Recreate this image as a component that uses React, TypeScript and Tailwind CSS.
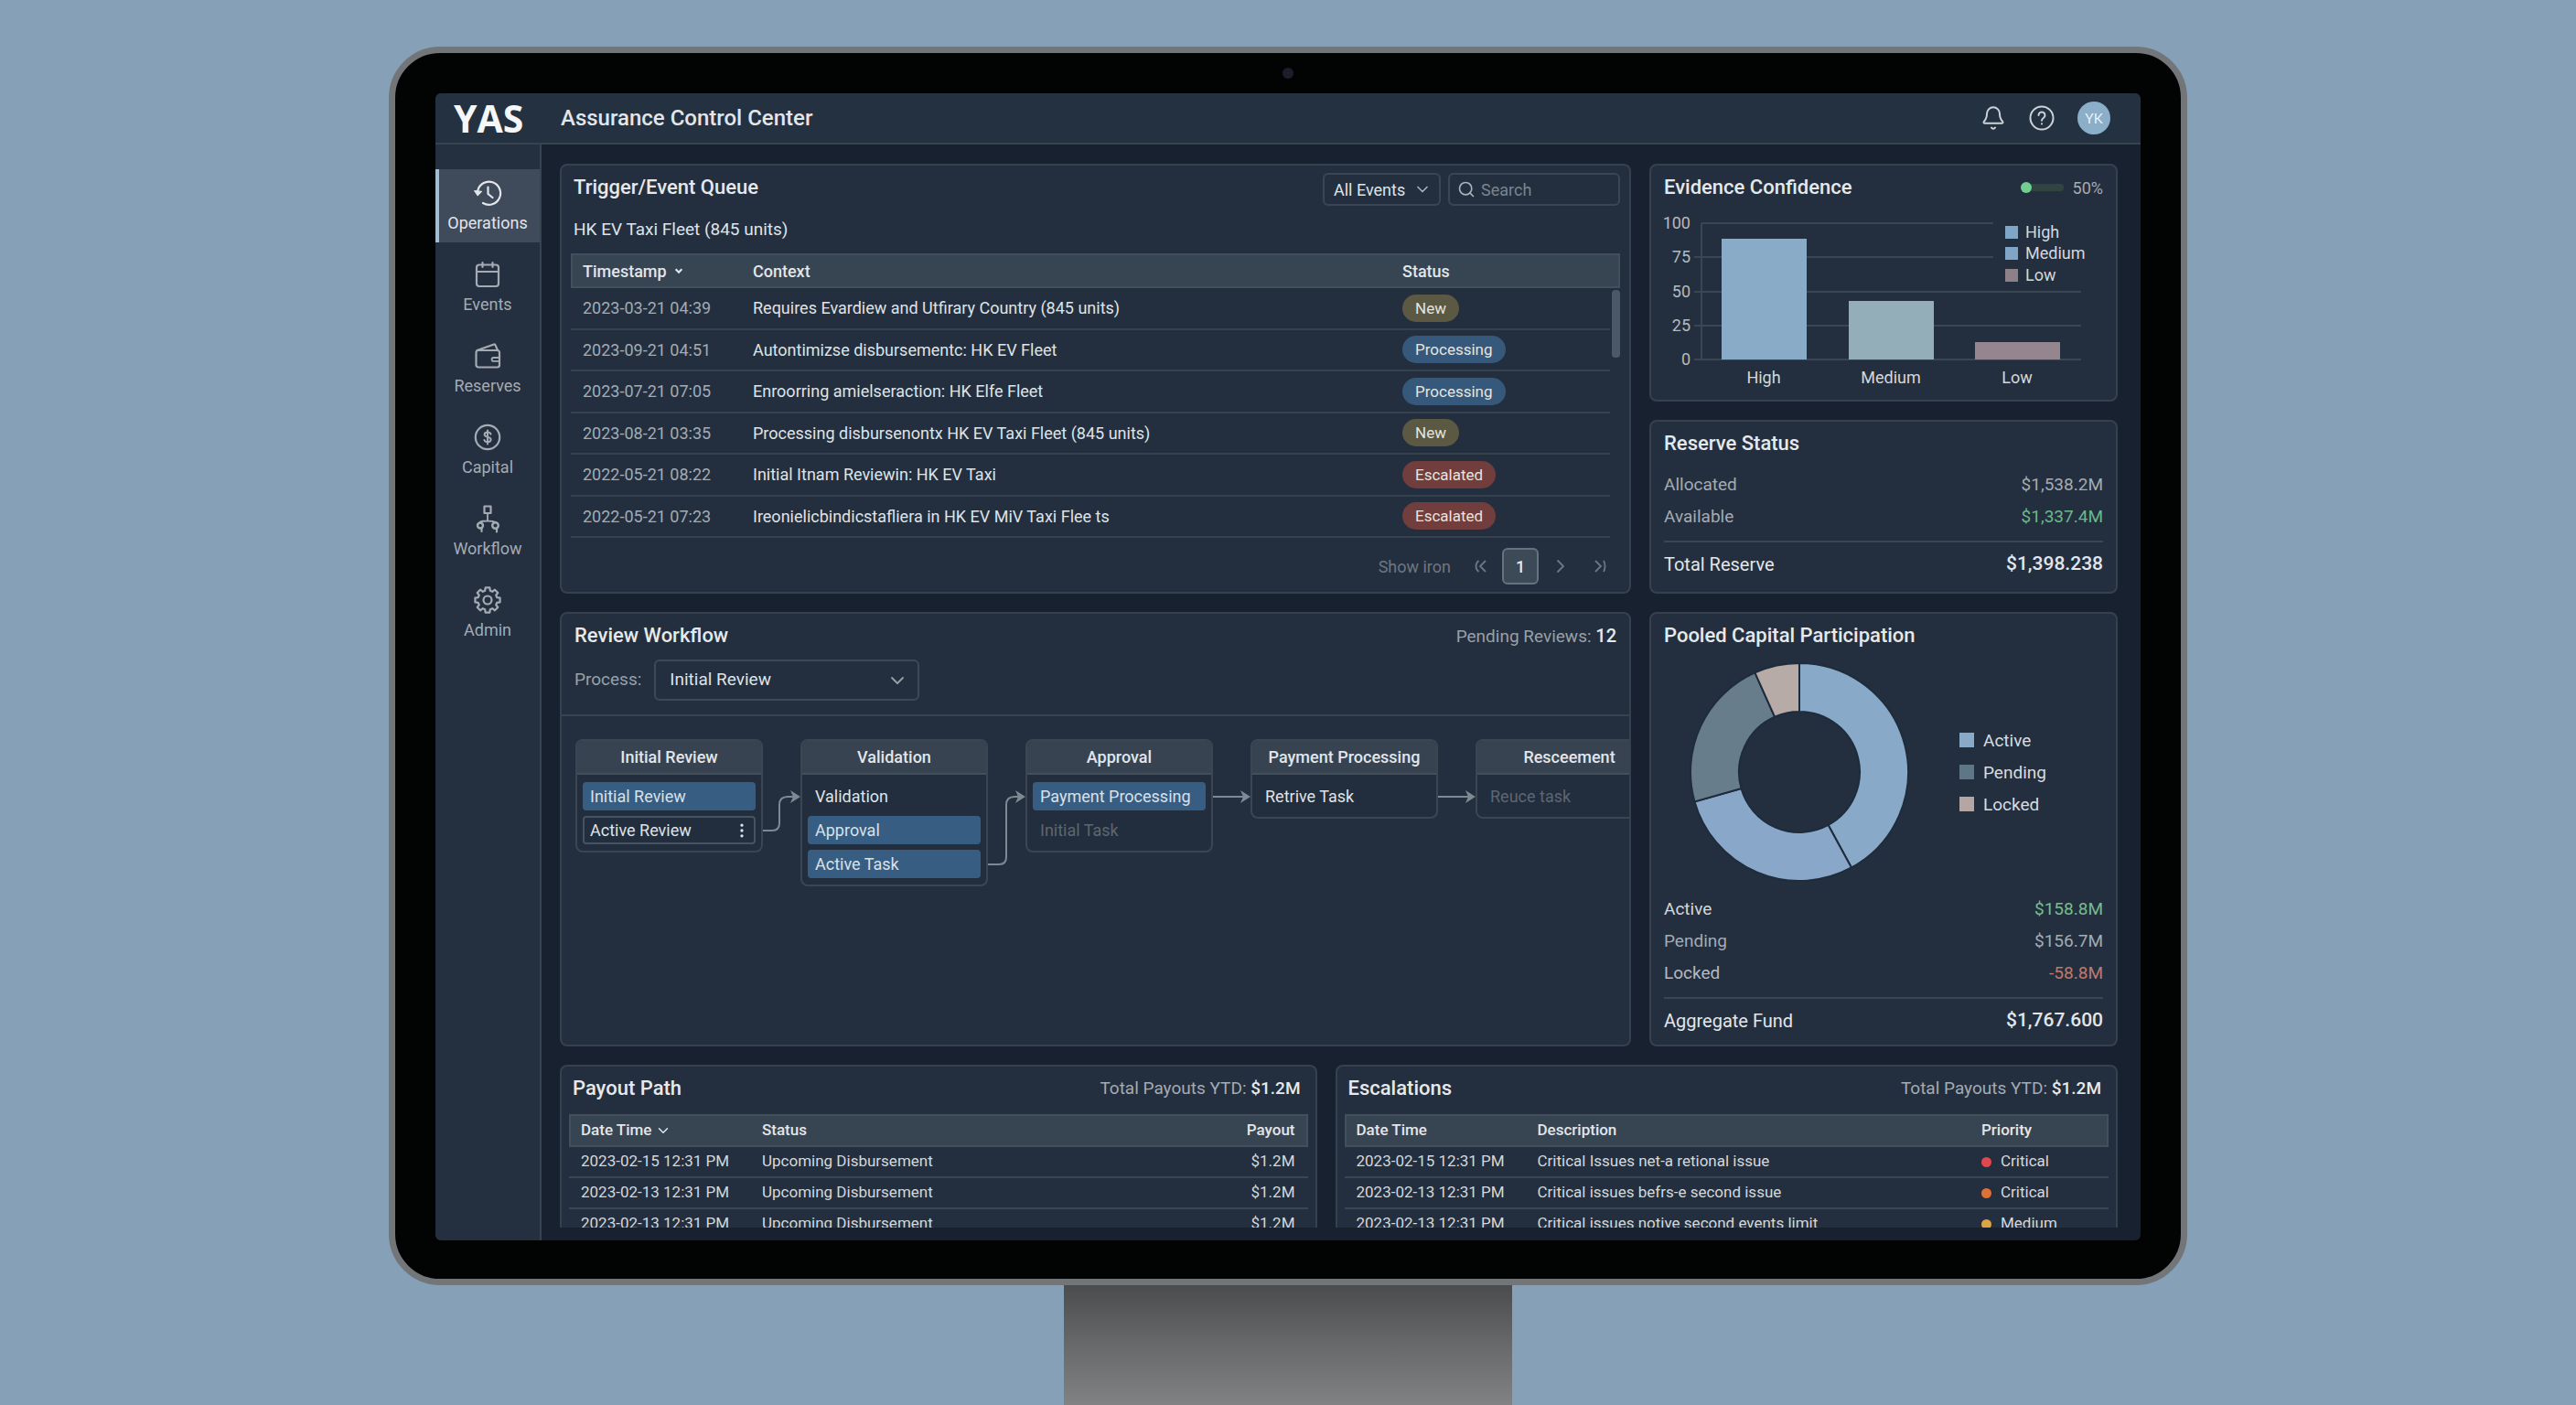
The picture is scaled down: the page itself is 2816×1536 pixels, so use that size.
import React from 'react';
import { Bell, ChevronDown, ChevronRight, EllipsisVertical, Search } from 'lucide-react';

type Status = 'New' | 'Processing' | 'Escalated';

const statusStyles: Record<Status, string> = {
  New: 'bg-[#5b5943]',
  Processing: 'bg-[#36597b]',
  Escalated: 'bg-[#713d3d]',
};

const events: { time: string; context: string; status: Status }[] = [
  { time: '2023-03-21 04:39', context: 'Requires Evardiew and Utfirary Country (845 units)', status: 'New' },
  { time: '2023-09-21 04:51', context: 'Autontimizse disbursementc: HK EV Fleet', status: 'Processing' },
  { time: '2023-07-21 07:05', context: 'Enroorring amielseraction: HK Elfe Fleet', status: 'Processing' },
  { time: '2023-08-21 03:35', context: 'Processing disbursenontx HK EV Taxi Fleet (845 units)', status: 'New' },
  { time: '2022-05-21 08:22', context: 'Initial Itnam Reviewin: HK EV Taxi', status: 'Escalated' },
  { time: '2022-05-21 07:23', context: 'Ireonielicbindicstafliera in HK EV MiV Taxi Flee ts', status: 'Escalated' },
];

const payouts = [
  { time: '2023-02-15 12:31 PM', status: 'Upcoming Disbursement', amount: '$1.2M' },
  { time: '2023-02-13 12:31 PM', status: 'Upcoming Disbursement', amount: '$1.2M' },
  { time: '2023-02-13 12:31 PM', status: 'Upcoming Disbursement', amount: '$1.2M' },
];

const escalations = [
  { time: '2023-02-15 12:31 PM', text: 'Critical Issues net-a retional issue', priority: 'Critical', dot: 'bg-[#e0484f]' },
  { time: '2023-02-13 12:31 PM', text: 'Critical issues befrs-e second issue', priority: 'Critical', dot: 'bg-[#dd7138]' },
  { time: '2023-02-13 12:31 PM', text: 'Critical issues notive second events limit', priority: 'Medium', dot: 'bg-[#dba545]' },
];

/* ---------- icons ---------- */

const Icon: React.FC<{ children: React.ReactNode }> = ({ children }) => (
  <svg className="w-8 h-8" viewBox="0 0 32 32" fill="none" stroke="currentColor" strokeWidth={2.2} strokeLinecap="round" strokeLinejoin="round" aria-hidden="true">
    {children}
  </svg>
);

// Eight teeth, four corners each
const gearPath = () => {
  const pts: string[] = [];
  for (let i = 0; i < 8; i++) {
    const base = (i * Math.PI) / 4;
    [[-0.27, 10.6], [-0.17, 13.8], [0.17, 13.8], [0.27, 10.6]].forEach(([a, r]) => {
      pts.push(`${(16 + r * Math.sin(base + a)).toFixed(2)} ${(16 - r * Math.cos(base + a)).toFixed(2)}`);
    });
  }
  return `M${pts.join('L')}Z`;
};

const navItems = [
  {
    label: 'Operations',
    icon: (
      <Icon>
        <path d="M5.2 13.5A12.6 12.6 0 1 1 11 27" />
        <path d="M1.8 13.6l7.6.8-4.2 4.2z" fill="currentColor" strokeWidth={1.2} />
        <path d="M16.5 9.5v7.5l5 4" />
      </Icon>
    ),
  },
  {
    label: 'Events',
    icon: (
      <Icon>
        <rect x="4" y="5.5" width="24" height="23.5" rx="3" />
        <path d="M4 13h24M10.5 3v5M21.5 3v5" />
      </Icon>
    ),
  },
  {
    label: 'Reserves',
    icon: (
      <Icon>
        <rect x="3.5" y="10" width="25.5" height="18.5" rx="2.5" />
        <path d="M4.5 10L23 3.5c.8-.2 1.3.1 1.6.9L27 10" />
        <path d="M28 18h-5.5a1.9 1.9 0 0 0 0 3.8H28" strokeWidth={1.8} />
      </Icon>
    ),
  },
  {
    label: 'Capital',
    icon: (
      <Icon>
        <circle cx="16" cy="16" r="13.2" />
        <path d="M19.5 12.6c-.5-1.4-1.8-2-3.5-2-2 0-3.4.9-3.4 2.5 0 3.5 7 1.9 7 5.500 0 1.700-1.500 2.700-3.500 2.700-1.900 0-3.200-.8-3.700-2.300M16 8.500v15" strokeWidth={2} />
      </Icon>
    ),
  },
  {
    label: 'Workflow',
    icon: (
      <Icon>
        <rect x="12.5" y="2.5" width="7" height="7.5" />
        <path d="M16 10v8.5M8 19.500c2-1 5-1 8-1s6 0 8.500 1.500" strokeWidth={1.8} />
        <circle cx="8" cy="23.5" r="3" strokeWidth={2.4} />
        <circle cx="24.5" cy="23.5" r="3.3" strokeWidth={2.4} />
        <path d="M9.5 26v4M26 27v3.5" strokeWidth={2.2} />
      </Icon>
    ),
  },
  {
    label: 'Admin',
    icon: (
      <Icon>
        <path d={gearPath()} />
        <circle cx="16" cy="16" r="4.5" />
      </Icon>
    ),
  },
];

/* ---------- shared pieces ---------- */

const Card: React.FC<{ className?: string; children: React.ReactNode }> = ({ className = '', children }) => (
  <section className={`rounded-lg border-2 border-[#35424e] bg-[#232f3e] pt-2 ${className}`}>{children}</section>
);

const CardTitle: React.FC<{ children: React.ReactNode }> = ({ children }) => (
  <h2 className="text-[22px] leading-8 font-medium text-[#e6e9ec]">{children}</h2>
);

const SummaryRow: React.FC<{ label: string; value: string; labelClass?: string; valueClass?: string }> = ({
  label,
  value,
  labelClass = 'text-[#a4abb3]',
  valueClass = 'text-[#a4abb3]',
}) => (
  <div className="flex h-[35px] items-center justify-between text-[19px]">
    <dt className={labelClass}>{label}</dt>
    <dd className={valueClass}>{value}</dd>
  </div>
);

const SummaryTotal: React.FC<{ label: string; value: string }> = ({ label, value }) => (
  <div className="mt-2 flex h-[50px] items-center justify-between border-t-2 border-[#3a4753] text-[20px] text-[#e2e6ea]">
    <dt>{label}</dt>
    <dd className="text-[21px] font-medium">{value}</dd>
  </div>
);

/* ---------- panels ---------- */

const EventQueue: React.FC = () => (
  <Card className="px-[10px] pb-2">
    <div className="flex items-start justify-between pl-[3px]">
      <CardTitle>Trigger/Event Queue</CardTitle>
      <div className="flex gap-2">
        <div className="relative">
          <select aria-label="Event filter" className="h-9 w-[129px] appearance-none rounded-md border-2 border-[#3a4753] bg-transparent pl-[10px] text-[18px] text-[#dfe3e7]">
            <option>All Events</option>
          </select>
          <ChevronDown className="pointer-events-none absolute top-2 right-[10px] h-5 w-5 text-[#a9b1b9]" />
        </div>
        <label className="flex h-9 w-[188px] items-center gap-[6px] rounded-md border-2 border-[#3a4753] px-2">
          <Search className="h-5 w-5 shrink-0 text-[#a9b1b9]" />
          <input type="text" placeholder="Search" aria-label="Search events" className="w-full min-w-0 bg-transparent text-[18px] text-[#dfe3e7] outline-none placeholder:text-[#7a848e]" />
        </label>
      </div>
    </div>
    <p className="mt-3 pl-[3px] text-[19px] leading-7 text-[#dfe3e7]">HK EV Taxi Fleet (845 units)</p>

    <div className="relative mt-3">
      <table className="h-[311px] w-full table-fixed border-separate border-spacing-0 text-left text-[18px]">
        <colgroup>
          <col className="w-[186px]" />
          <col />
          <col className="w-[240px]" />
          <col className="w-[11px]" />
        </colgroup>
        <thead>
          <tr className="h-[38px] bg-[#374452] text-[#e2e6ea]">
            <th className="border-y-2 border-l-2 border-[#43505c] pl-[11px] font-medium">
              <span className="flex items-center gap-2">
                Timestamp
                <svg className="h-[10px] w-[10px]" viewBox="0 0 12 12" fill="none" stroke="currentColor" strokeWidth={2.6} aria-hidden="true">
                  <path d="M2 4l4 4 4-4" />
                </svg>
              </span>
            </th>
            <th className="border-y-2 border-[#43505c] pl-[13px] font-medium">Context</th>
            <th className="border-y-2 border-[#43505c] pl-[13px] font-medium">Status</th>
            <th className="border-y-2 border-r-2 border-[#43505c]"></th>
          </tr>
        </thead>
        <tbody>
          {events.map((e) => (
            <tr key={e.time}>
              <td className="border-b-2 border-[#35424e] pl-[13px] text-[#a4abb3]">{e.time}</td>
              <td className="border-b-2 border-[#35424e] pl-[13px] text-[#dfe3e7]">{e.context}</td>
              <td className="border-b-2 border-[#35424e] pl-[13px]">
                <span className={`inline-block rounded-full px-[14px] text-[17px] leading-[30px] text-[#e6e4dc] ${statusStyles[e.status]}`}>{e.status}</span>
              </td>
              <td></td>
            </tr>
          ))}
        </tbody>
      </table>
      <div className="absolute top-10 right-0 h-[74px] w-[9px] rounded-sm bg-[#4b5967]"></div>
    </div>

    <div className="mt-[11px] flex items-center justify-end pr-[9px] text-[18px] text-[#6d7781]">
      <span>Show iron</span>
      <button aria-label="First page" className="ml-5 flex h-6 w-6 items-center justify-center">
        <svg className="h-4 w-4" viewBox="0 0 16 16" fill="none" stroke="currentColor" strokeWidth={1.8} aria-hidden="true">
          <path d="M6.500 2C2.500 5 2.500 11 6.500 14M14 2L8 8l6 6" />
        </svg>
      </button>
      <button className="mx-3 h-10 w-10 rounded-md border-2 border-[#66727d] bg-[#3c4957] text-[18px] font-medium text-[#e6e9ec]">1</button>
      <button aria-label="Next page" className="flex h-6 w-6 items-center justify-center">
        <ChevronRight className="h-6 w-6" strokeWidth={1.8} />
      </button>
      <button aria-label="Last page" className="ml-5 flex h-6 w-6 items-center justify-center">
        <svg className="h-4 w-4" viewBox="0 0 16 16" fill="none" stroke="currentColor" strokeWidth={1.8} aria-hidden="true">
          <path d="M2 2l6 6-6 6M11 2c2 3 2 9 0 12" />
        </svg>
      </button>
    </div>
  </Card>
);

const bars = [
  { label: 'High', x: 63, top: 34, fill: '#8aabc8' },
  { label: 'Medium', x: 202, top: 102, fill: '#93aeb9' },
  { label: 'Low', x: 340, top: 147, fill: '#95858f' },
];

const gridLines = [
  { label: '100', y: 17, from: 41, to: 360 },
  { label: '75', y: 54, from: 33, to: 360 },
  { label: '50', y: 92, from: 33, to: 456 },
  { label: '25', y: 129, from: 33, to: 456 },
  { label: '0', y: 166, from: 33, to: 456 },
];

const chartLegend = [
  { label: 'High', y: 27, fill: '#7fa6c6' },
  { label: 'Medium', y: 50, fill: '#7fa6c6' },
  { label: 'Low', y: 74, fill: '#8d8088' },
];

const EvidenceConfidence: React.FC = () => (
  <Card className="flex-1 px-[14px]">
    <div className="flex items-center justify-between">
      <CardTitle>Evidence Confidence</CardTitle>
      <label className="flex items-center gap-[10px] text-[18px] text-[#a4abb3]">
        <input
          type="range"
          min={0}
          max={100}
          defaultValue={0}
          aria-label="Confidence threshold"
          className="h-2 w-[47px] appearance-none rounded-full bg-[#30453f] [&::-webkit-slider-thumb]:h-3 [&::-webkit-slider-thumb]:w-3 [&::-webkit-slider-thumb]:appearance-none [&::-webkit-slider-thumb]:rounded-full [&::-webkit-slider-thumb]:bg-[#72cf92]"
        />
        50%
      </label>
    </div>
    <svg className="mt-[6px] w-full" viewBox="0 0 480 200" fontSize="18" role="img" aria-label="Evidence confidence by level">
      {gridLines.map((g) => (
        <g key={g.label}>
          <line x1={g.from} x2={g.to} y1={g.y} y2={g.y} stroke="#3a4753" strokeWidth="2" />
          <text x="29" y={g.y + 6} textAnchor="end" fill="#b4bac1">{g.label}</text>
        </g>
      ))}
      <line x1="41" x2="41" y1="17" y2="166" stroke="#3a4753" strokeWidth="2" />
      {bars.map((b) => (
        <g key={b.label}>
          <rect x={b.x} y={b.top} width="93" height={166 - b.top} fill={b.fill} />
          <text x={b.x + 46} y="192" textAnchor="middle" fill="#d3d8dc">{b.label}</text>
        </g>
      ))}
      {chartLegend.map((l) => (
        <g key={l.label}>
          <rect x="373" y={l.y - 7} width="14" height="14" fill={l.fill} />
          <text x="395" y={l.y + 6} fill="#d3d8dc">{l.label}</text>
        </g>
      ))}
    </svg>
  </Card>
);

const ReserveStatus: React.FC = () => (
  <Card className="px-[14px] pb-[6px]">
    <CardTitle>Reserve Status</CardTitle>
    <dl className="mt-3">
      <SummaryRow label="Allocated" value="$1,538.2M" />
      <SummaryRow label="Available" value="$1,337.4M" valueClass="text-[#6ab98a]" />
      <SummaryTotal label="Total Reserve" value="$1,398.238" />
    </dl>
  </Card>
);

type Task = { label: string; kind: 'active' | 'outlined' | 'plain' | 'muted' };

const taskStyles: Record<Task['kind'], string> = {
  active: 'border-[#385d83] bg-[#385d83] text-[#d9e1e8]',
  outlined: 'border-[#465360] text-[#dfe3e7]',
  plain: 'border-transparent text-[#dfe3e7]',
  muted: 'border-transparent text-[#5d6771]',
};

const stages: { title: string; tasks: Task[]; link?: string }[] = [
  {
    title: 'Initial Review',
    tasks: [
      { label: 'Initial Review', kind: 'active' },
      { label: 'Active Review', kind: 'outlined' },
    ],
    link: 'M0 100H10Q18 100 18 92V72Q18 63 27 63H34',
  },
  {
    title: 'Validation',
    tasks: [
      { label: 'Validation', kind: 'plain' },
      { label: 'Approval', kind: 'active' },
      { label: 'Active Task', kind: 'active' },
    ],
    link: 'M0 137H12Q20 137 20 129V72Q20 63 29 63H34',
  },
  {
    title: 'Approval',
    tasks: [
      { label: 'Payment Processing', kind: 'active' },
      { label: 'Initial Task', kind: 'muted' },
    ],
    link: 'M0 63H34',
  },
  { title: 'Payment Processing', tasks: [{ label: 'Retrive Task', kind: 'plain' }], link: 'M0 63H34' },
  { title: 'Resceement', tasks: [{ label: 'Reuce task', kind: 'muted' }] },
];

const ReviewWorkflow: React.FC = () => (
  <Card className="min-w-0 overflow-hidden">
    <div className="flex items-center justify-between px-[14px]">
      <CardTitle>Review Workflow</CardTitle>
      <p className="text-[19px] text-[#98a0a9]">
        Pending Reviews: <strong className="text-[20px] font-medium text-[#e6e9ec]">12</strong>
      </p>
    </div>
    <div className="mt-[10px] flex items-center gap-[14px] border-b-2 border-[#364450] px-[14px] pb-[15px]">
      <label htmlFor="process" className="text-[19px] text-[#98a0a9]">Process:</label>
      <div className="relative">
        <select id="process" className="h-[45px] w-[290px] appearance-none rounded-md border-2 border-[#3d4a56] bg-transparent pl-[15px] text-[19px] text-[#dfe3e7]">
          <option>Initial Review</option>
        </select>
        <ChevronDown className="pointer-events-none absolute top-[11px] right-3 h-6 w-6 text-[#98a0a9]" strokeWidth={1.8} />
      </div>
    </div>
    <div className="mt-[25px] flex items-start pl-[15px]">
      {stages.map((stage) => (
        <React.Fragment key={stage.title}>
          <div className="w-[205px] shrink-0 overflow-hidden rounded-lg border-2 border-[#3a4753] bg-[#222d3d]">
            <h3 className="h-[37px] border-b-2 border-[#43505c] bg-[#374351] text-center text-[18px] leading-9 font-medium text-[#e2e6ea]">{stage.title}</h3>
            <ul className="flex flex-col gap-[6px] px-[6px] pt-2 pb-[7px] text-[18px]">
              {stage.tasks.map((task) => (
                <li key={task.label} className={`flex h-[31px] items-center justify-between rounded border-2 pl-[6px] ${taskStyles[task.kind]}`}>
                  {task.label}
                  {task.kind === 'outlined' && (
                    <button aria-label="Task options" className="pr-[3px]">
                      <EllipsisVertical className="h-5 w-5" />
                    </button>
                  )}
                </li>
              ))}
            </ul>
          </div>
          {stage.link && (
            <svg className="h-[170px] w-[41px] shrink-0" viewBox="0 0 41 170" fill="none" stroke="#7e8994" strokeWidth="2" aria-hidden="true">
              <path d={stage.link} />
              <path d="M30 56l11 7-11 7 3-7z" fill="#7e8994" stroke="none" />
            </svg>
          )}
        </React.Fragment>
      ))}
    </div>
  </Card>
);

// Donut slices in degrees, clockwise from the top
const slices = [
  { from: 0, to: 151.4, fill: '#88a9c7' },
  { from: 151.4, to: 254.2, fill: '#89a7c8' },
  { from: 254.2, to: 335.9, fill: '#687d8b' },
  { from: 335.9, to: 360, fill: '#b7aba7' },
];

const slicePath = (from: number, to: number) => {
  const pt = (deg: number, r: number) => {
    const a = (deg * Math.PI) / 180;
    return `${(121 + r * Math.sin(a)).toFixed(2)} ${(121 - r * Math.cos(a)).toFixed(2)}`;
  };
  return `M${pt(from, 119)}A119 119 0 0 1 ${pt(to, 119)}L${pt(to, 66)}A66 66 0 0 0 ${pt(from, 66)}Z`;
};

const PooledCapital: React.FC = () => (
  <Card className="px-[14px]">
    <CardTitle>Pooled Capital Participation</CardTitle>
    <div className="mt-3 flex items-center pl-[27px]">
      <svg className="h-[242px] w-[242px]" viewBox="0 0 242 242" role="img" aria-label="Pooled capital split">
        {slices.map((s) => (
          <path key={s.from} d={slicePath(s.from, s.to)} fill={s.fill} stroke="#1e2c3c" strokeWidth="2" />
        ))}
      </svg>
      <ul className="ml-[54px] text-[19px] leading-[35px] text-[#d8dce0]">
        <li className="flex items-center gap-[10px]"><span className="h-4 w-4 bg-[#88a9c7]"></span>Active</li>
        <li className="flex items-center gap-[10px]"><span className="h-4 w-4 bg-[#5f7687]"></span>Pending</li>
        <li className="flex items-center gap-[10px]"><span className="h-4 w-4 bg-[#b5a5a3]"></span>Locked</li>
      </ul>
    </div>
    <dl className="mt-3">
      <SummaryRow label="Active" value="$158.8M" labelClass="text-[#d3d8dc]" valueClass="text-[#77bb92]" />
      <SummaryRow label="Pending" value="$156.7M" />
      <SummaryRow label="Locked" value="-58.8M" labelClass="text-[#b4bac1]" valueClass="text-[#bd7a72]" />
      <SummaryTotal label="Aggregate Fund" value="$1,767.600" />
    </dl>
  </Card>
);

const TotalPayouts: React.FC = () => (
  <p className="text-[19px] text-[#a4abb3]">
    Total Payouts YTD: <strong className="font-medium text-[#e6e9ec]">$1.2M</strong>
  </p>
);

const PayoutPath: React.FC = () => (
  <Card className="px-2">
    <div className="flex items-center justify-between pr-2 pl-1">
      <CardTitle>Payout Path</CardTitle>
      <TotalPayouts />
    </div>
    <table className="mt-3 w-full table-fixed border-separate border-spacing-0 text-left text-[17px] text-[#d3d8dc]">
      <thead>
        <tr className="h-9 bg-[#374452] text-[#e2e6ea]">
          <th className="w-[198px] border-y-2 border-l-2 border-[#43505c] pl-[11px] font-medium">
            <span className="flex items-center gap-1">
              Date Time
              <ChevronDown className="h-[18px] w-[18px]" />
            </span>
          </th>
          <th className="border-y-2 border-[#43505c] pl-[13px] font-medium">Status</th>
          <th className="w-[160px] border-y-2 border-r-2 border-[#43505c] pr-3 text-right font-medium">Payout</th>
        </tr>
      </thead>
      <tbody>
        {payouts.map((p, i) => (
          <tr key={i} className="h-[34px]">
            <td className="border-b-2 border-[#3a4753] pl-[13px]">{p.time}</td>
            <td className="border-b-2 border-[#3a4753] pl-[13px]">{p.status}</td>
            <td className="border-b-2 border-[#3a4753] pr-[14px] text-right">{p.amount}</td>
          </tr>
        ))}
      </tbody>
    </table>
  </Card>
);

const Escalations: React.FC = () => (
  <Card className="px-2">
    <div className="flex items-center justify-between pr-2 pl-1">
      <CardTitle>Escalations</CardTitle>
      <TotalPayouts />
    </div>
    <table className="mt-3 w-full table-fixed border-separate border-spacing-0 text-left text-[17px] text-[#d3d8dc]">
      <thead>
        <tr className="h-9 bg-[#374452] text-[#e2e6ea]">
          <th className="w-[198px] border-y-2 border-l-2 border-[#43505c] pl-[11px] font-medium">Date Time</th>
          <th className="border-y-2 border-[#43505c] pl-[13px] font-medium">Description</th>
          <th className="w-[152px] border-y-2 border-r-2 border-[#43505c] pl-[13px] font-medium">Priority</th>
        </tr>
      </thead>
      <tbody>
        {escalations.map((e, i) => (
          <tr key={i} className="h-[34px]">
            <td className="border-b-2 border-[#3a4753] pl-[13px]">{e.time}</td>
            <td className="border-b-2 border-[#3a4753] pl-[13px]">{e.text}</td>
            <td className="border-b-2 border-[#3a4753] pl-[13px]">
              <span className="flex items-center gap-[10px]">
                <span className={`h-[11px] w-[11px] rounded-full ${e.dot}`}></span>
                {e.priority}
              </span>
            </td>
          </tr>
        ))}
      </tbody>
    </table>
  </Card>
);

/* ---------- shell ---------- */

const Sidebar: React.FC = () => (
  <nav aria-label="Main" className="flex w-[116px] shrink-0 flex-col gap-[9px] border-r-2 border-[#364450] bg-[#242f3f] pt-[27px]">
    {navItems.map((item, i) => (
      <a
        key={item.label}
        href="#"
        className={`flex h-20 flex-col items-center border-l-4 pt-[10px] pr-1 text-[18px] leading-6 ${
          i === 0 ? 'border-[#a3bed2] bg-[#3f4b5a] text-[#e2e6ea]' : 'border-transparent text-[#a4abb3]'
        }`}
      >
        {item.icon}
        <span className="mt-[5px]">{item.label}</span>
      </a>
    ))}
  </nav>
);

const Header: React.FC = () => (
  <header className="flex h-14 shrink-0 items-center border-b-2 border-[#364450] bg-[#243140] pr-[33px]">
    <div className="w-[137px] pl-5 font-['Open_Sans',sans-serif] text-[41px] leading-none font-bold text-[#f4f6f8]">YAS</div>
    <h1 className="text-[24px] font-medium text-[#e2e6ea]">Assurance Control Center</h1>
    <div className="ml-auto flex items-center gap-[25px] text-[#ccd2d8]">
      <button aria-label="Notifications">
        <Bell className="h-7 w-7" strokeWidth={1.7} />
      </button>
      <button aria-label="Help">
        <svg className="h-7 w-7" viewBox="0 0 28 28" fill="none" stroke="currentColor" strokeWidth={2} strokeLinecap="round" aria-hidden="true">
          <circle cx="14" cy="14" r="12.5" />
          <path d="M10.500 11a3.500 3.500 0 1 1 5.300 3c-1.200.8-1.800 1.400-1.800 2.800M14 20.300v.2" />
        </svg>
      </button>
      <button aria-label="Account" className="h-9 w-9 rounded-full bg-[#8baec9] font-['Lato',sans-serif] text-[15px] text-[#eef3f7]">YK</button>
    </div>
  </header>
);

export default function App() {
  return (
    <div className="flex h-screen flex-col items-center overflow-hidden bg-[#86a0b8] px-[425px] pt-[51px] font-['Roboto',sans-serif]">
      {/* Monitor */}
      <div className="flex min-h-0 w-full flex-1 flex-col rounded-[56px] border-[7px] border-[#737679] bg-[#020303] px-[44px] pb-[42px]">
        <div className="flex h-[44px] shrink-0 items-center justify-center">
          <div className="h-3 w-3 rounded-full bg-[#1b1e2d]"></div>
        </div>
        <div className="flex min-h-0 flex-1 flex-col overflow-hidden rounded-md bg-[#172130]">
          <Header />
          <div className="flex min-h-0 flex-1">
            <Sidebar />
            <main className="flex min-w-0 flex-1 flex-col gap-5 overflow-hidden pt-[21px] pr-[25px] pb-[14px] pl-5">
              <div className="grid shrink-0 grid-cols-[minmax(0,1fr)_512px] gap-5">
                <EventQueue />
                <div className="flex flex-col gap-5">
                  <EvidenceConfidence />
                  <ReserveStatus />
                </div>
              </div>
              <div className="grid min-h-[475px] shrink-0 grid-cols-[minmax(0,1fr)_512px] gap-5">
                <ReviewWorkflow />
                <PooledCapital />
              </div>
              <div className="grid min-h-0 flex-1 grid-cols-[828fr_856fr] gap-5 overflow-hidden">
                <PayoutPath />
                <Escalations />
              </div>
            </main>
          </div>
        </div>
      </div>
      {/* Stand */}
      <div className="h-[131px] w-[490px] shrink-0 bg-linear-to-b from-[#4b4c4e] via-[#67696b] to-[#808284]"></div>
    </div>
  );
}
